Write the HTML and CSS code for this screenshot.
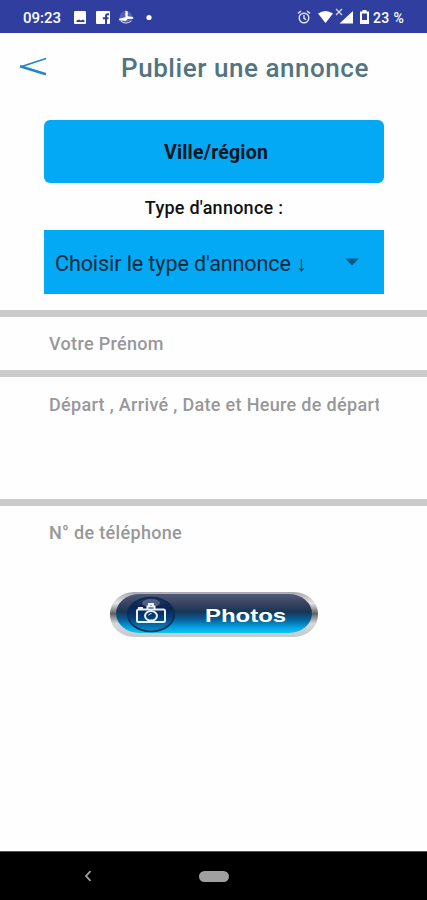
FILE: index.html
```html
<!DOCTYPE html>
<html lang="fr">
<head>
<meta charset="utf-8">
<title>Publier une annonce</title>
<link rel="stylesheet" href="styles.css">
</head>
<body>
<div class="screen">
  <div class="status">
    <span class="clock">09:23</span>
    <svg class="status-left" width="82" height="20" viewBox="0 0 82 20" fill="#fff">
      <path fill-rule="evenodd" d="M2 4h10q1 0 1 1v11q0 1-1 1H2q-1 0-1-1V5q0-1 1-1zM3.500 15h8v-1.500l-1.500-1-2 1-2-1-2.500 1z"/>
      <rect x="23" y="4" width="14" height="13" rx="1"/>
      <path d="M36 7.300h-1.200q-1.800 0-1.800 1.800V17M29.800 11.200H35.500" fill="none" stroke="#303f9f" stroke-width="2"/>
      <circle cx="53" cy="10.500" r="6.500" fill="#7f89ce" opacity=".45"/>
      <path d="M52.500 3.500l2.200 1v4.700l5.500.7v1.800l-5.500.3-1.700 2-7-.7v-1.500l6.300-1.600z"/>
      <path d="M47.500 14q5 4 11 0" fill="none" stroke="#c9cef0"/>
      <circle cx="76" cy="10.500" r="2.600"/>
    </svg>
    <svg class="status-right" width="76" height="20" viewBox="0 0 76 20" fill="#fff">
      <g fill="none" stroke="#e4e7fa" stroke-width="1.400">
        <circle cx="8" cy="11" r="4.800"/>
        <path d="M2 6.500l3-2.500M14 6.500l-3-2.500M8 8v3.300l2 1.300"/>
      </g>
      <path d="M22 6.500q7.500-5 15 0l-7.500 9.500z"/>
      <path d="M40 2l6 6m0-6l-6 6" stroke="#d9dcf5" stroke-width="1.200"/>
      <path d="M57 4v12.500H43.500z"/>
      <path fill-rule="evenodd" d="M66.500 3h4v1.500h2.500V17h-9V4.500h2.500zM66 6.500v6.500h5V6.500z"/>
    </svg>
    <span class="battery">23 %</span>
  </div>

  <header class="header">
    <svg class="back" width="30" height="22" viewBox="0 0 30 22" fill="none" stroke="#2286c8">
      <path d="M28 2.500L3 10.800" stroke-width="1.700"/>
      <path d="M2 10.300L28 18.300" stroke-width="2.500"/>
    </svg>
    <h1 class="title">Publier une annonce</h1>
  </header>

  <main class="form">
    <div class="region">Ville/région</div>
    <div class="type-label">Type d'annonce :</div>
    <div class="select">
      <span class="choice">Choisir le type d'annonce ↓</span>
      <svg class="caret" width="14" height="8" viewBox="0 0 14 8"><path d="M0 .5h14L7 7.500z" fill="#075b87"/></svg>
    </div>
    <div class="field name"><span class="hint">Votre Prénom</span></div>
    <div class="field details"><span class="hint">Départ , Arrivé , Date et Heure de départ</span></div>
    <div class="field phone"><span class="hint">N° de téléphone</span></div>
    <div class="photos">
      <div class="photos-face">
        <svg class="camera" width="50" height="42" viewBox="0 0 50 42">
          <defs>
            <linearGradient id="lens" x1="0" y1="0" x2="0" y2="1">
              <stop offset="0" stop-color="#26375f"/>
              <stop offset=".3" stop-color="#0b2350"/>
              <stop offset=".6" stop-color="#063f78"/>
              <stop offset="1" stop-color="#0793d0"/>
            </linearGradient>
          </defs>
          <ellipse cx="25" cy="21.500" rx="23.300" ry="17" fill="url(#lens)" stroke="#062d55" stroke-width="1.600"/>
          <ellipse cx="25" cy="10" rx="9" ry="4" fill="#8790aa" opacity=".5"/>
          <g fill="none" stroke="#e8f3fb" stroke-width="2">
            <rect x="11" y="16.500" width="28" height="12.500" rx="1.500"/>
            <path d="M21.500 16.500v-3h7v3M23 13.500v-2.500h4v2.500M13 16v-1h4"/>
            <ellipse cx="25" cy="22.800" rx="6" ry="4.800"/>
            <path d="M22.500 22.500q.5-2 3-2" stroke-width="1"/>
          </g>
        </svg>
        <span class="photos-text">Photos</span>
      </div>
    </div>
  </main>

  <nav class="nav">
    <svg class="nav-back" width="8" height="12" viewBox="0 0 8 12"><path d="M6.500 1.200L2 6l4.500 4.800" fill="none" stroke="#a0a0a0" stroke-width="1.800"/></svg>
    <span class="pill"></span>
  </nav>
</div>
</body>
</html>
```
FILE: styles.css
```css
* { box-sizing: border-box; }
body { margin: 0; background: #fff; font-family: Roboto, "Liberation Sans", sans-serif; }
.screen { width: 427px; height: 900px; display: flex; flex-direction: column; overflow: hidden; background: #fefefe; }
.status { height: 33px; flex: none; display: flex; align-items: center; background: #303f9f; color: #fff; font-size: 15px; font-weight: 500; padding: 2px 0 0 23px; white-space: nowrap; }
.clock { width: 50px; }
.status-left { margin-top: -2px; }
.status-right { margin: -2px 0 0 141px; }
.battery { margin-left: 1px; font-size: 14px; letter-spacing: .4px; }
.header { height: 87px; flex: none; display: flex; align-items: flex-start; padding: 17px 0 0 18px; }
.back { margin-top: 6px; }
.title { margin: 0 0 0 73px; font-size: 26px; line-height: 36px; font-weight: 500; letter-spacing: .55px; color: #527481; white-space: nowrap; }
.form { flex: 1; display: flex; flex-direction: column; align-items: center; }
.region, .select { width: 340px; margin-right: -1px; background: #03a9f4; color: #03151e; display: flex; align-items: center; }
.region { height: 63px; border-radius: 6px; justify-content: center; font-size: 19.500px; font-weight: 700; letter-spacing: .2px; padding: 1px 0 0 4px; }
.type-label { height: 47px; line-height: 49px; font-size: 18px; font-weight: 500; letter-spacing: .25px; padding-left: 1px; color: #111; }
.select { height: 64px; padding: 3px 25px 0 11px; justify-content: space-between; font-size: 21.500px; letter-spacing: -.08px; white-space: nowrap; margin-bottom: 16px; }
.choice { color: #04293c; }
.caret { margin-top: -3px; }
.field { width: 100%; padding: 0 48px 0 49px; border-top: 7px solid #cbcbcb; color: #989898; font-size: 18px; font-weight: 500; letter-spacing: .32px; }
.hint { display: block; overflow: hidden; white-space: nowrap; line-height: 24px; }
.name { height: 60px; padding-top: 15px; }
.details { height: 129px; padding-top: 16px; }
.phone { height: 93px; padding-top: 15px; }
.photos { width: 208px; height: 45px; margin-left: 1px; padding: 2px 6px 4px; border-radius: 24px / 22px; background: linear-gradient(#a8a9ae, #e4e4e4 25%, #5c6268 48%, #d8d8d8 70%, #c4cacd); }
.photos-face { height: 39px; display: flex; align-items: center; border-radius: 24px / 20px; padding-left: 10px; background: linear-gradient(#515b78, #35415f 26%, #173656 46%, #075b94 64%, #049ddc 84%, #0bc5f4); }
.camera { flex: none; }
.photos-text { margin: 5px 0 0 29px; color: #fff; font: 700 19px "Liberation Sans", sans-serif; transform: scaleX(1.260); transform-origin: left center; }
.nav { height: 49px; flex: none; display: flex; align-items: center; background: #000; border-top: 1px solid #555; padding-left: 84px; }
.pill { width: 30px; height: 11px; margin-left: 107px; border-radius: 6px; background: #a0a0a0; }
```
